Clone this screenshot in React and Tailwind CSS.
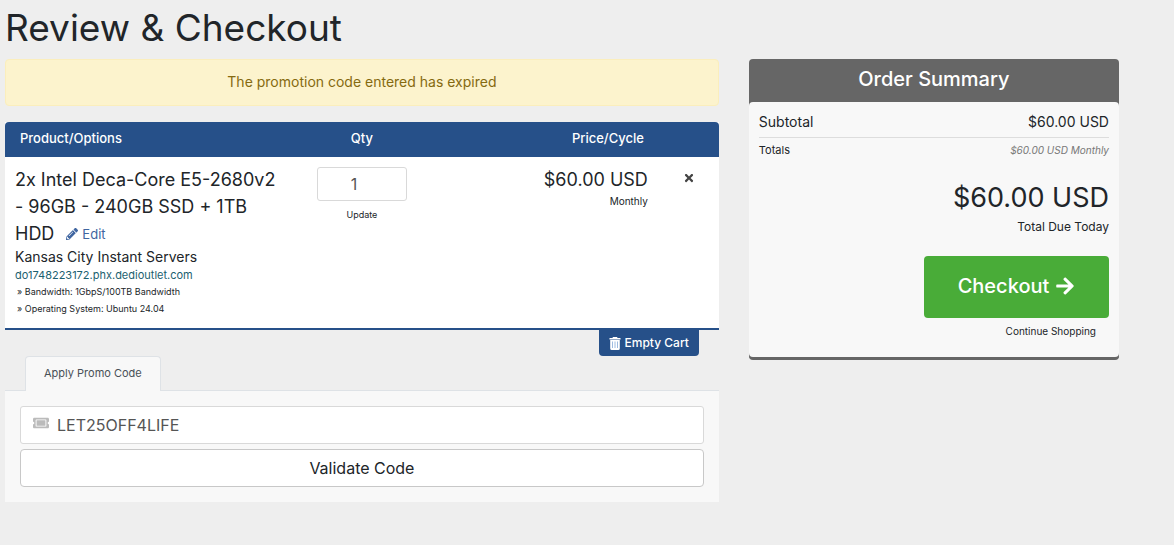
import { useState } from "react";
import {
  FaArrowRight,
  FaPencilAlt,
  FaTicketAlt,
  FaTimes,
} from "react-icons/fa";

const cartItem = {
  name: "2x Intel Deca-Core E5-2680v2 - 96GB - 240GB SSD + 1TB HDD",
  group: "Kansas City Instant Servers",
  domain: "do1748223172.phx.dedioutlet.com",
  options: ["Bandwidth: 1GbpS/100TB Bandwidth", "Operating System: Ubuntu 24.04"],
  price: "$60.00 USD",
  cycle: "Monthly",
};

// Bin with pale ribs, drawn on a 12px grid so it stays crisp
const TrashIcon = () => (
  <svg viewBox="0 0 12 13" className="h-[13px] w-3" aria-hidden="true">
    <path
      fill="currentColor"
      d="M4 0h4l.6 1H11.500v1.500H.5V1H3.400zM1.200 3h9.600v8.500a1.500 1.500 0 0 1-1.500 1.500H2.700a1.500 1.500 0 0 1-1.500-1.500z"
    />
    <path stroke="#9dbbe0" strokeWidth="1" d="M3.500 4.500v6.500M6 4.500v6.500M8.500 4.500v6.500" />
  </svg>
);

const CartTable = () => {
  const [qty, setQty] = useState("1");

  return (
    <div>
      <table className="w-full table-fixed border-b-2 border-[#265089] bg-white">
        <thead className="text-[13px] leading-5 text-white">
          <tr>
            <th className="w-2/5 rounded-tl bg-[#265089] px-[15px] pt-1.5 pb-[9px] text-left font-medium">
              Product/Options
            </th>
            <th className="w-1/5 bg-[#265089] pt-1.5 pb-[9px] text-center font-medium">
              Qty
            </th>
            <th className="bg-[#265089] pt-1.5 pr-[15px] pb-[9px] text-right font-medium">
              Price/Cycle
            </th>
            <th aria-label="Remove" className="w-[60px] rounded-tr bg-[#265089]" />
          </tr>
        </thead>
        <tbody>
          <tr className="align-top">
            <td className="px-2.5 pt-[9px] pb-[11px]">
              <div className="text-lg leading-[27px]">
                {cartItem.name}
                <a href="#edit" className="ml-3 inline-flex items-center gap-1 text-[13px] leading-5 text-[#3f65a0]">
                  <FaPencilAlt className="size-3" />
                  Edit
                </a>
              </div>
              <div className="text-sm leading-5">{cartItem.group}</div>
              <div className="text-[11px] leading-4 text-[#1c5f70]">{cartItem.domain}</div>
              <ul className="pl-0.5 text-[9px] leading-[17px]">
                {cartItem.options.map((option) => (
                  <li key={option}>» {option}</li>
                ))}
              </ul>
            </td>
            <td className="pt-2.5 text-center">
              <input
                type="text"
                aria-label="Quantity"
                value={qty}
                onChange={(e) => setQty(e.target.value)}
                className="mx-auto block h-[34px] w-[90px] rounded-[3px] border border-[#d9d9d9] pr-4 text-center text-base text-[#555]"
              />
              <button type="button" className="mt-1.5 block w-full text-[9px] leading-4">
                Update
              </button>
            </td>
            <td className="pt-[9px] pr-[11px] text-right">
              <div className="text-lg leading-[27px]">{cartItem.price}</div>
              <div className="text-[10px] leading-4">{cartItem.cycle}</div>
            </td>
            <td className="pt-[15px]">
              <button type="button" aria-label="Remove item" className="mx-auto block">
                <FaTimes className="size-3 text-[#444]" />
              </button>
            </td>
          </tr>
        </tbody>
      </table>
      <div className="flex justify-end pr-5">
        <button
          type="button"
          className="flex items-center gap-1 rounded-b bg-[#265089] px-2.5 py-0.5 text-xs leading-[22px] font-medium text-white"
        >
          <TrashIcon />
          Empty Cart
        </button>
      </div>
    </div>
  );
};

const PromoCode = () => {
  const [code, setCode] = useState("LET25OFF4LIFE");

  return (
    <section>
      <div className="flex border-b border-[#dee2e6] px-5">
        <button
          type="button"
          className="-mb-px rounded-t border border-b-0 border-[#dee2e6] bg-[#f8f8f8] px-[18px] pt-2 pb-2.5 text-[11px] leading-4 text-[#495057]"
        >
          Apply Promo Code
        </button>
      </div>
      <form className="bg-[#f8f8f8] p-[15px]" onSubmit={(e) => e.preventDefault()}>
        <div className="mb-[5px] flex h-[38px] items-center gap-2 rounded-[3px] border border-[#d9d9d9] bg-white px-3">
          <label htmlFor="promo" aria-label="Promo code">
            <FaTicketAlt className="mb-1 size-4 text-[#bbb]" />
          </label>
          <input
            id="promo"
            type="text"
            value={code}
            onChange={(e) => setCode(e.target.value)}
            className="min-w-0 flex-1 text-base text-[#555] outline-none"
          />
        </div>
        <button
          type="submit"
          className="h-[38px] w-full rounded border border-[#c8c8c8] bg-white text-base"
        >
          Validate Code
        </button>
      </form>
    </section>
  );
};

const OrderSummary = () => (
  <aside className="rounded border-b-3 border-[#666] bg-[#666]">
    <h2 className="pt-[5px] pb-2 text-center text-xl leading-[30px] font-medium text-white">
      Order Summary
    </h2>
    <div className="rounded bg-[#f8f8f8] px-2.5 pt-2 pb-[18px]">
      <div className="flex justify-between border-b border-[#ddd] pt-0.5 pb-[5px] text-sm leading-5">
        <span>Subtotal</span>
        <span>{cartItem.price}</span>
      </div>
      <div className="flex justify-between pt-1 leading-4">
        <span className="text-[11px]">Totals</span>
        <span className="text-[10px] text-[#777] italic">
          {cartItem.price} {cartItem.cycle}
        </span>
      </div>
      <div className="pt-5 text-right">
        <div className="text-[27px] leading-10">{cartItem.price}</div>
        <div className="text-xs leading-[18px]">Total Due Today</div>
      </div>
      <div className="flex flex-col items-end pt-5">
        <button
          type="button"
          className="flex h-[62px] w-[185px] items-center justify-center gap-1.5 rounded bg-[#49ac38] pb-0.5 text-xl font-medium text-white"
        >
          Checkout
          <FaArrowRight className="size-5" />
        </button>
        <a href="#shop" className="mt-[5px] mr-[13px] text-[10px] leading-4">
          Continue Shopping
        </a>
      </div>
    </div>
  </aside>
);

const App = () => {
  return (
    <main className="min-h-screen bg-[#eee] pr-[55px] pb-10 pl-[5px] font-['Inter','Liberation_Sans',sans-serif] text-[#212529]">
      <h1 className="pt-1.5 pb-[9px] text-[37px] leading-[44px]">Review & Checkout</h1>
      <div className="grid grid-cols-[27fr_14fr] items-start gap-[30px]">
        <div>
          <div
            role="alert"
            className="mb-4 rounded border border-[#fbeebc] bg-[#fcf3cd] px-5 pt-[11px] pb-3 text-center text-sm leading-[22px] text-[#856a10]"
          >
            The promotion code entered has expired
          </div>
          <CartTable />
          <PromoCode />
        </div>
        <OrderSummary />
      </div>
    </main>
  );
};

export default App;
